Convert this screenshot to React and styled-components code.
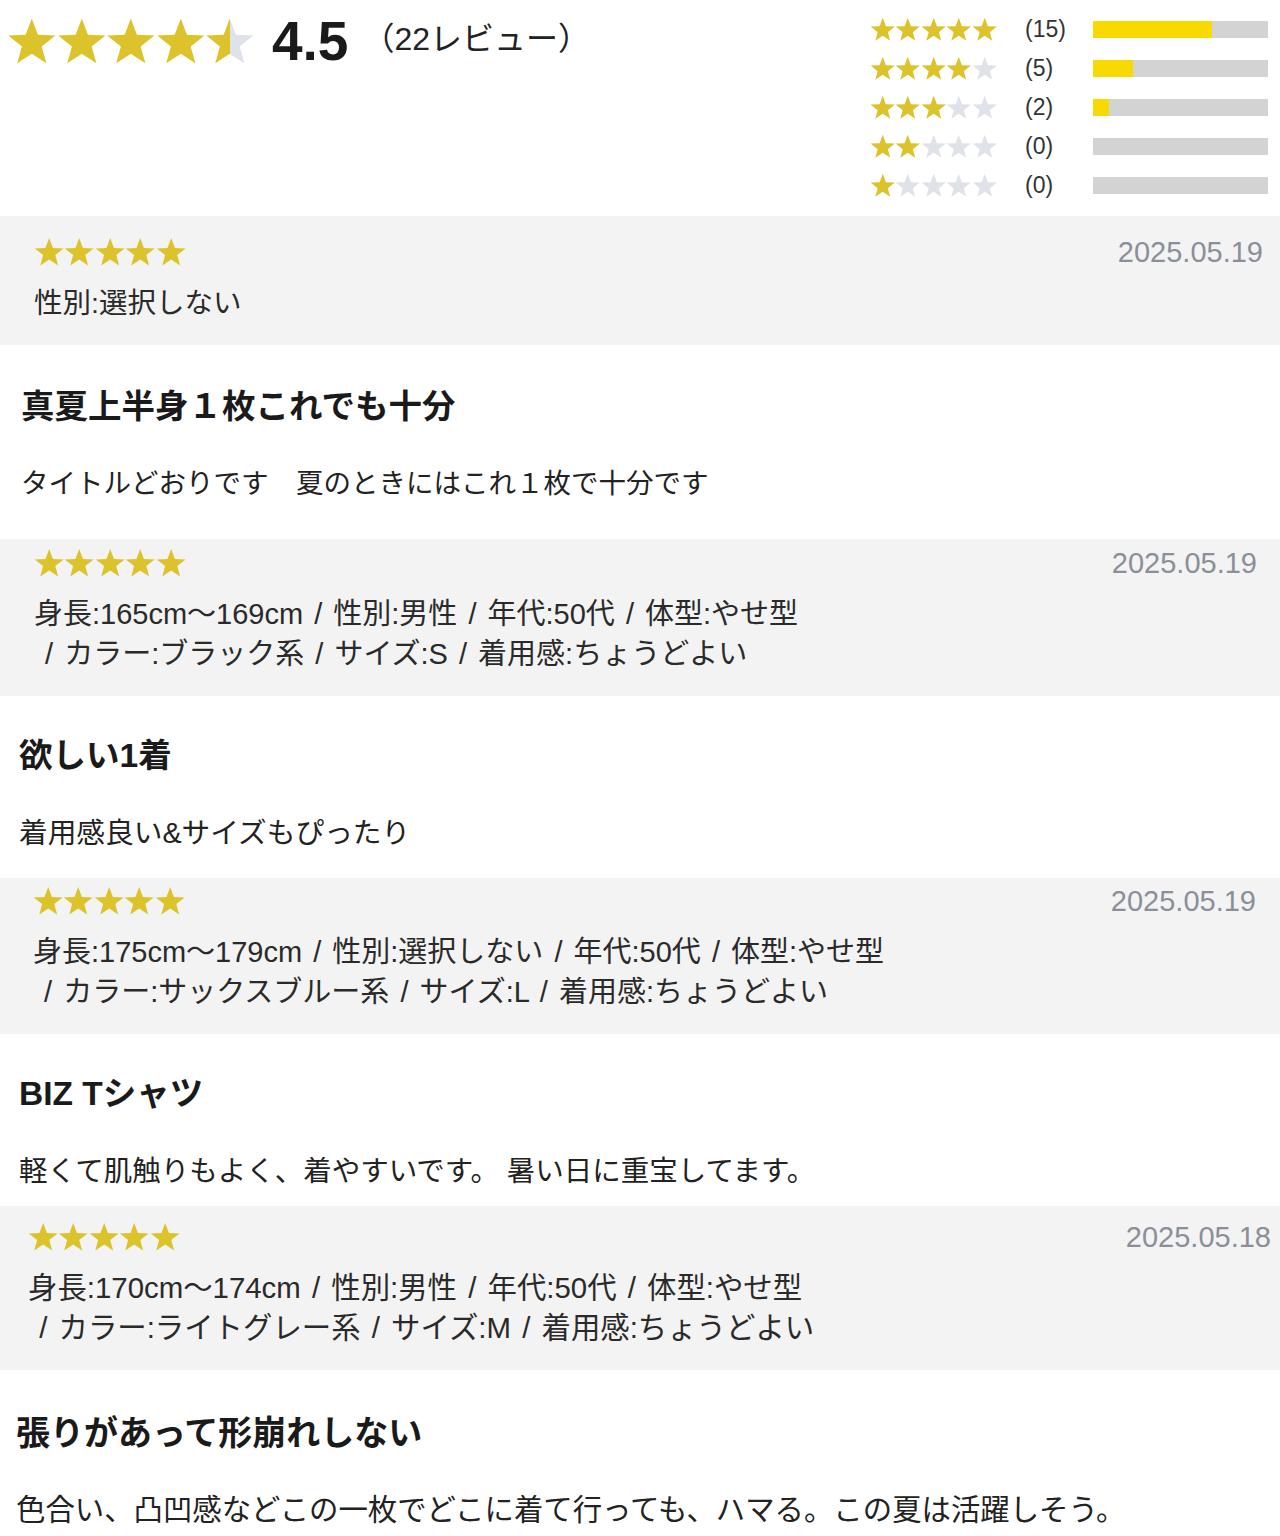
import React, { useId } from "react";
import styled, { createGlobalStyle } from "styled-components";

const GOLD = "#dcc32b";
const EMPTY = "#dfe2e8";
const FONT = `"Liberation Sans", "Noto Sans CJK JP", sans-serif`;

const GlobalStyle = createGlobalStyle`
  html, body { margin: 0; padding: 0; background: #fff; }
  body { font-family: ${FONT}; color: #222; }
`;

const STAR_POINTS =
  "50,3 62.34,36.01 97.55,37.55 69.97,59.49 79.39,93.45 50,74 20.61,93.45 30.03,59.49 2.45,37.55 37.66,36.01";

const StarSvg = styled.svg`
  display: block;
  flex: none;
`;

function Star({ size, fill }) {
  const rid = "g" + useId().replace(/[^a-zA-Z0-9]/g, "");
  const partial = fill > 0 && fill < 1;
  const color = partial ? `url(#${rid})` : fill >= 1 ? GOLD : EMPTY;
  return (
    <StarSvg width={size} height={size * 0.96} viewBox="0 0 100 96">
      {partial && (
        <defs>
          <linearGradient id={rid} x1="0" x2="1" y1="0" y2="0">
            <stop offset={fill} stopColor={GOLD} />
            <stop offset={fill} stopColor={EMPTY} />
          </linearGradient>
        </defs>
      )}
      <polygon points={STAR_POINTS} fill={color} />
    </StarSvg>
  );
}

const StarsWrap = styled.span`
  display: flex;
  flex: none;
`;

function Stars({ value, size }) {
  return (
    <StarsWrap>
      {[0, 1, 2, 3, 4].map((i) => (
        <Star key={i} size={size} fill={Math.max(0, Math.min(1, value - i))} />
      ))}
    </StarsWrap>
  );
}

/* ---------- header ---------- */
const Header = styled.header`
  display: flex;
  justify-content: space-between;
  align-items: flex-start;
  padding: 0 12px 11px 7px;
`;

const Summary = styled.div`
  display: flex;
  align-items: center;
  padding-top: 17px;
  height: 48px;
`;

const Score = styled.span`
  margin-left: 17px;
  font-size: 55px;
  line-height: 1;
  font-weight: 700;
  color: #1a1a1a;
`;

const ReviewTotal = styled.span`
  margin-left: 14px;
  font-size: 32px;
  line-height: 1;
  color: #222;
  margin-top: -4px;
`;

const Breakdown = styled.div`
  display: flex;
  flex-direction: column;
  padding-top: 10px;
`;

const BreakRow = styled.div`
  display: flex;
  align-items: center;
  height: 39px;
`;

const Count = styled.span`
  width: 68px;
  margin-left: 28px;
  font-size: 23px;
  color: #333;
`;

const Bar = styled.div`
  width: 175px;
  height: 17px;
  background: #d3d3d3;
  display: flex;
`;

const BarFill = styled.div`
  height: 100%;
  background: #f8d900;
`;

/* ---------- reviews ---------- */
const ReviewHead = styled.div`
  background: #f3f3f3;
  padding: ${(p) => p.$pt}px ${(p) => p.$pr}px 22px ${(p) => p.$pl}px;
`;

const HeadRow = styled.div`
  display: flex;
  justify-content: space-between;
  align-items: center;
  height: 36px;
`;

const DateText = styled.span`
  font-size: 29px;
  line-height: 1;
  color: #8a8f98;
`;

const Meta = styled.div`
  margin-top: 13px;
  font-size: ${(p) => p.$size}px;
  line-height: 40px;
  color: #2a2a2a;
  word-spacing: 3px;
`;

const MetaLine = styled.div`
  white-space: nowrap;
`;

const ReviewBody = styled.div`
  padding: ${(p) => p.$pt}px 20px ${(p) => p.$pb}px ${(p) => p.$pl}px;
`;

const Title = styled.h3`
  margin: 0;
  font-size: ${(p) => p.$size}px;
  line-height: 40px;
  font-weight: 700;
  color: #1a1a1a;
`;

const Body = styled.p`
  margin: 37px 0 0;
  font-size: ${(p) => p.$size}px;
  line-height: 40px;
  color: #222;
  white-space: pre;
`;

const breakdown = [
  { stars: 5, count: 15 },
  { stars: 4, count: 5 },
  { stars: 3, count: 2 },
  { stars: 2, count: 0 },
  { stars: 1, count: 0 },
];
const TOTAL = 22;

const reviews = [
  {
    date: "2025.05.19",
    meta: ["性別:選択しない"],
    title: "真夏上半身１枚これでも十分",
    text: "タイトルどおりです　夏のときにはこれ１枚で十分です",
    head: { pt: 18, pl: 34, pr: 17, size: 28.5 },
    body: { pt: 42, pl: 21, pb: 35, title: 33.5, size: 27.5 },
  },
  {
    date: "2025.05.19",
    meta: [
      "身長:165cm〜169cm / 性別:男性 / 年代:50代 / 体型:やせ型",
      "\u00a0/ カラー:ブラック系 / サイズ:S / 着用感:ちょうどよい",
    ],
    title: "欲しい1着",
    text: "着用感良い&サイズもぴったり",
    head: { pt: 6, pl: 34, pr: 23, size: 29 },
    body: { pt: 40, pl: 19, pb: 25, title: 33.5, size: 28.7 },
  },
  {
    date: "2025.05.19",
    meta: [
      "身長:175cm〜179cm / 性別:選択しない / 年代:50代 / 体型:やせ型",
      "\u00a0/ カラー:サックスブルー系 / サイズ:L / 着用感:ちょうどよい",
    ],
    title: "BIZ Tシャツ",
    text: "軽くて肌触りもよく、着やすいです。 暑い日に重宝してます。",
    head: { pt: 5, pl: 33, pr: 24, size: 29 },
    body: { pt: 40, pl: 19, pb: 15, title: 33.5, size: 28.5 },
  },
  {
    date: "2025.05.18",
    meta: [
      "身長:170cm〜174cm / 性別:男性 / 年代:50代 / 体型:やせ型",
      "\u00a0/ カラー:ライトグレー系 / サイズ:M / 着用感:ちょうどよい",
    ],
    title: "張りがあって形崩れしない",
    text: "色合い、凸凹感などこの一枚でどこに着て行っても、ハマる。この夏は活躍しそう。",
    head: { pt: 13, pl: 28, pr: 9, size: 29.4 },
    body: { pt: 43, pl: 16, pb: 4, title: 34, size: 29.4 },
  },
];

export default function App() {
  return (
    <>
      <GlobalStyle />
      <Header>
        <Summary>
          <Stars value={4.5} size={49.6} />
          <Score>4.5</Score>
          <ReviewTotal>（22レビュー）</ReviewTotal>
        </Summary>
        <Breakdown>
          {breakdown.map((b) => (
            <BreakRow key={b.stars}>
              <Stars value={b.stars} size={25.5} />
              <Count>({b.count})</Count>
              <Bar>
                <BarFill style={{ width: `${(b.count / TOTAL) * 100}%` }} />
              </Bar>
            </BreakRow>
          ))}
        </Breakdown>
      </Header>
      {reviews.map((r, i) => (
        <section key={i}>
          <ReviewHead $pt={r.head.pt} $pl={r.head.pl} $pr={r.head.pr}>
            <HeadRow>
              <Stars value={5} size={30.4} />
              <DateText>{r.date}</DateText>
            </HeadRow>
            <Meta $size={r.head.size}>
              {r.meta.map((m, j) => (
                <MetaLine key={j}>{m}</MetaLine>
              ))}
            </Meta>
          </ReviewHead>
          <ReviewBody $pt={r.body.pt} $pl={r.body.pl} $pb={r.body.pb}>
            <Title $size={r.body.title}>{r.title}</Title>
            <Body $size={r.body.size}>{r.text}</Body>
          </ReviewBody>
        </section>
      ))}
    </>
  );
}
